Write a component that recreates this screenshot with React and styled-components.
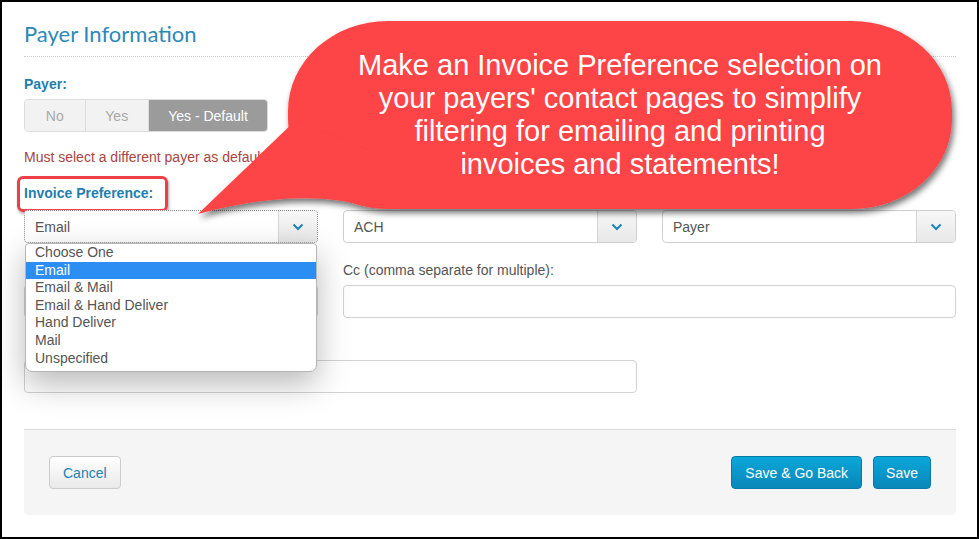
import React from "react";
import styled, { createGlobalStyle } from "styled-components";

const GlobalStyle = createGlobalStyle`
  html, body { margin: 0; padding: 0; background: #fff; }
  body { font-family: "Liberation Sans", Arial, sans-serif; }
  * { box-sizing: border-box; }
`;

const Frame = styled.div`
  position: relative;
  width: 979px;
  height: 539px;
  border: 2px solid #000;
  background: #fff;
  overflow: hidden;
  font-family: "Liberation Sans", Arial, sans-serif;
  font-size: 14px;
  color: #555;
`;

const Content = styled.div`
  padding: 0 21px 0 22px;
`;

const Title = styled.h2`
  margin: 0;
  padding: 19px 0 9px;
  font-family: Lato, "Liberation Sans", sans-serif;
  font-weight: 400;
  font-size: 22px;
  line-height: 26px;
  color: #2c88b9;
  border-bottom: 1px dotted #cfcfcf;
`;

const Label = styled.div`
  position: relative;
  display: block;
  height: 20px;
  font-weight: ${(p) => (p.$bold ? 700 : 400)};
  color: ${(p) => (p.$bold ? "#1f7eae" : "#555")};
  line-height: 20px;
  margin-top: ${(p) => p.$mt || 0}px;
  margin-bottom: ${(p) => p.$mb ?? 6}px;
`;

const Highlight = styled.span`
  position: absolute;
  left: -7px;
  top: -7px;
  width: 151px;
  height: 36px;
  border: 3px solid #ef3e47;
  border-radius: 6px;
  box-shadow: 1px 2px 3px rgba(0, 0, 0, 0.35);
  pointer-events: none;
`;

const ButtonGroup = styled.div`
  display: flex;
  width: 244px;
  height: 33px;
  border-radius: 4px;
  overflow: hidden;
  border: 1px solid #dcdcdc;
`;

const Toggle = styled.div`
  width: ${(p) => p.$w}px;
  display: flex;
  align-items: center;
  justify-content: center;
  background: ${(p) => (p.$active ? "#9b9b9b" : "#f2f2f2")};
  color: ${(p) => (p.$active ? "#fff" : "#a8a8a8")};
  border-left: ${(p) => (p.$first ? "none" : "1px solid #dcdcdc")};
`;

const ErrorText = styled.div`
  color: #a94442;
  line-height: 20px;
  margin-top: 15px;
`;

const Grid = styled.div`
  display: grid;
  grid-template-columns: repeat(3, 1fr);
  column-gap: 25px;
  row-gap: 17px;
`;

const Field = styled.div`
  grid-column: ${(p) => p.$span || "auto"};
  position: relative;
`;

const SelectBox = styled.div`
  position: relative;
  display: flex;
  height: 33px;
  border: 1px ${(p) => (p.$focus ? "dotted #8a8a8a" : "solid #cfcfcf")};
  border-radius: 4px;
  background: #fff;
`;

const SelectValue = styled.div`
  flex: 1;
  display: flex;
  align-items: center;
  padding-left: 10px;
  color: #555;
`;

const Arrow = styled.div`
  width: 39px;
  display: flex;
  align-items: center;
  justify-content: center;
  border-left: 1px solid #d6d6d6;
  background: linear-gradient(#f7f7f7, #e8e8e8);
  border-radius: 0 3px 3px 0;
`;

const Input = styled.div`
  height: 33px;
  border: 1px solid #d2d2d2;
  border-radius: 4px;
  background: #fff;
`;

const Dropdown = styled.ul`
  position: absolute;
  left: 0;
  right: 0;
  top: calc(100% + 1px);
  margin: 0;
  padding: 0 0 4px;
  list-style: none;
  background: #fff;
  border: 1px solid #b5b5b5;
  border-radius: 4px 4px 7px 7px;
  box-shadow: 0 12px 32px rgba(0, 0, 0, 0.28);
  z-index: 5;
`;

const Option = styled.li`
  height: 17.6px;
  line-height: 17.6px;
  padding-left: 9px;
  background: ${(p) => (p.$selected ? "#2c8ef2" : "transparent")};
  color: ${(p) => (p.$selected ? "#fff" : "#555")};
`;

const Footer = styled.div`
  margin-top: 36px;
  height: 86px;
  background: #f5f5f5;
  border-top: 1px solid #d9d9d9;
  border-radius: 0 0 4px 4px;
  display: flex;
  align-items: flex-start;
  justify-content: space-between;
  padding: 26px 25px 0;
`;

const Actions = styled.div`
  display: flex;
  gap: 11px;
`;

const Btn = styled.button`
  height: 33px;
  padding: 0 ${(p) => p.$px || 12}px;
  font-family: "Liberation Sans", Arial, sans-serif;
  font-size: 14px;
  border-radius: 4px;
  cursor: pointer;
  color: ${(p) => (p.$primary ? "#fff" : "#2582b1")};
  border: 1px solid ${(p) => (p.$primary ? "#0a7aa8" : "#cccccc")};
  background: ${(p) =>
    p.$primary
      ? "linear-gradient(#0ba6da, #0987b8)"
      : "linear-gradient(#ffffff, #e9e9e9)"};
`;

const CalloutLayer = styled.svg`
  position: absolute;
  left: 0;
  top: 0;
  pointer-events: none;
  z-index: 10;
`;

const CalloutText = styled.div`
  position: absolute;
  left: 286px;
  top: 18px;
  width: 664px;
  height: 190px;
  display: flex;
  align-items: center;
  justify-content: center;
  text-align: center;
  font-family: "Liberation Sans", Arial, sans-serif;
  font-size: 29px;
  line-height: 33px;
  color: #fff;
  z-index: 11;
`;

const Chevron = () => (
  <svg width="12" height="8" viewBox="0 0 12 8">
    <path d="M1.5 1.5 L6 6 L10.5 1.5" fill="none" stroke="#1d84bd" strokeWidth="2" />
  </svg>
);

const Select = ({ value, focus, children }) => (
  <SelectBox $focus={focus}>
    <SelectValue>{value}</SelectValue>
    <Arrow>
      <Chevron />
    </Arrow>
    {children}
  </SelectBox>
);

const options = [
  "Choose One",
  "Email",
  "Email & Mail",
  "Email & Hand Deliver",
  "Hand Deliver",
  "Mail",
  "Unspecified",
];

export default function App() {
  return (
    <>
      <GlobalStyle />
      <Frame>
        <Content>
          <Title>Payer Information</Title>
          <Label $bold $mt={17} $mb={5}>Payer:</Label>
          <ButtonGroup>
            <Toggle $w={60} $first>No</Toggle>
            <Toggle $w={64}>Yes</Toggle>
            <Toggle $w={120} $active>Yes - Default</Toggle>
          </ButtonGroup>
          <ErrorText>Must select a different payer as default</ErrorText>
          <Label $bold $mt={16} $mb={7}>
            Invoice Preference:
            <Highlight />
          </Label>
          <Grid>
            <Field>
              <Select value="Email" focus>
                <Dropdown>
                  {options.map((o) => (
                    <Option key={o} $selected={o === "Email"}>
                      {o}
                    </Option>
                  ))}
                </Dropdown>
              </Select>
            </Field>
            <Field>
              <Select value="ACH" />
            </Field>
            <Field>
              <Select value="Payer" />
            </Field>
            <Field>
              <Label $mb={5} />
              <Input />
            </Field>
            <Field $span="2 / span 2">
              <Label $mb={5}>Cc (comma separate for multiple):</Label>
              <Input />
            </Field>
            <Field $span="1 / span 2">
              <Label $mb={5} />
              <Input />
            </Field>
          </Grid>
          <Footer>
            <Btn $px={13}>Cancel</Btn>
            <Actions>
              <Btn $primary $px={13}>Save &amp; Go Back</Btn>
              <Btn $primary $px={12}>Save</Btn>
            </Actions>
          </Footer>
        </Content>

        <CalloutLayer width="979" height="539" viewBox="0 0 979 539">
          <defs>
            <filter id="shadow" x="-10%" y="-10%" width="130%" height="140%">
              <feDropShadow dx="2" dy="4" stdDeviation="3" floodColor="#000" floodOpacity="0.55" />
            </filter>
          </defs>
          <g filter="url(#shadow)" fill="#fd4446">
            <rect x="286" y="19" width="664" height="188" rx="100" ry="90" />
            <path d="M294 118 L196 212 Q300 184 372 206 L372 150 Z" />
          </g>
        </CalloutLayer>
        <CalloutText>
          Make an Invoice Preference selection on
          <br />
          your payers' contact pages to simplify
          <br />
          filtering for emailing and printing
          <br />
          invoices and statements!
        </CalloutText>
      </Frame>
    </>
  );
}
